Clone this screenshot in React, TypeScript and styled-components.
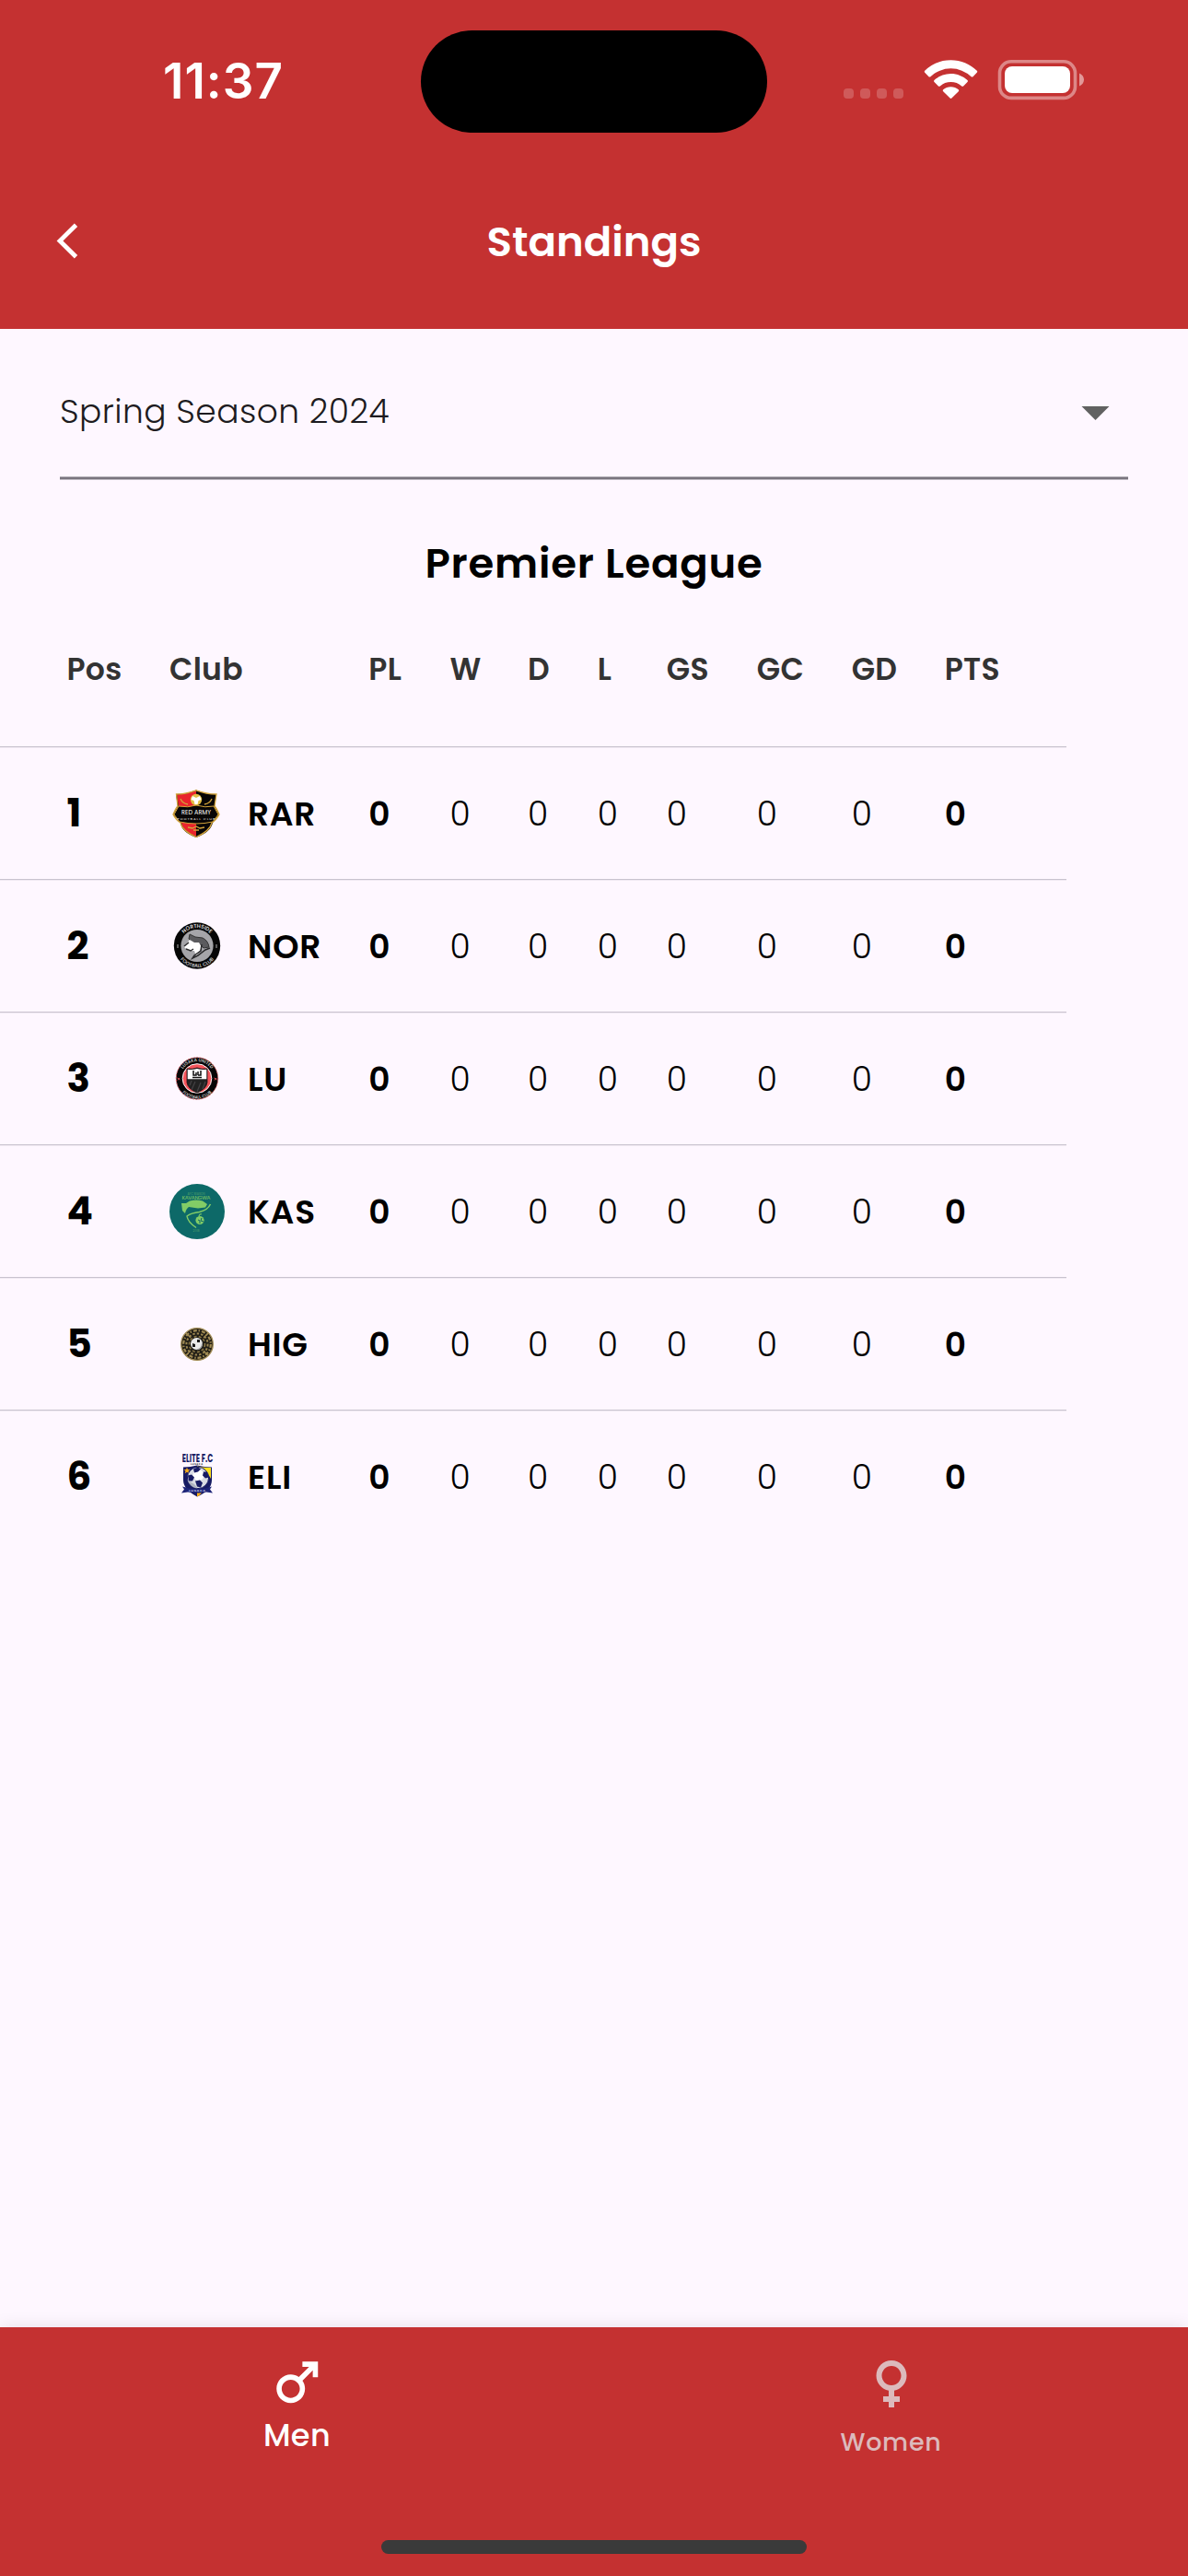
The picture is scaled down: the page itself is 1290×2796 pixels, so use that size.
import React from "react";
import styled, { createGlobalStyle } from "styled-components";

const Global = createGlobalStyle`
  * { box-sizing: border-box; }
  body {
    margin: 0;
    background: #fef7ff;
    font-family: Poppins, Inter, "Noto Sans", sans-serif;
    -webkit-font-smoothing: antialiased;
  }
`;

const Screen = styled.div`
  width: 1290px;
  height: 2796px;
  display: flex;
  flex-direction: column;
  background: #fef7ff;
  overflow: hidden;
`;

const Header = styled.header`
  height: 357px;
  background: #c43131;
  color: #fff;
`;

const StatusBar = styled.div`
  height: 177px;
  padding-top: 33px;
  display: grid;
  grid-template-columns: 457px 376px 1fr;
  align-items: start;
`;

const Clock = styled.div`
  height: 111px;
  padding-left: 177px;
  line-height: 110px;
  font-family: Inter, sans-serif;
  font-size: 53px;
  font-weight: 600;
  letter-spacing: 1px;
`;

const Island = styled.div`
  height: 111px;
  border-radius: 56px;
  background: #000;
`;

const StatusIcons = styled.svg`
  display: block;
  width: 457px;
  height: 111px;
`;

const AppBar = styled.div`
  height: 171px;
  display: grid;
  grid-template-columns: 120px 1fr 120px;
  align-items: center;
`;

const BackButton = styled.button`
  display: flex;
  padding: 0 0 3px 60px;
  border: 0;
  background: none;
`;

const Title = styled.h1`
  margin: 0;
  text-align: center;
  font-size: 45px;
  font-weight: 600;
`;

const Main = styled.main`
  flex: 1;
`;

const Select = styled.div`
  margin: 0 65px;
  height: 160px;
  padding: 18px 20px 0 0;
  display: flex;
  align-items: center;
  justify-content: space-between;
  color: #1d1b20;
  font-size: 36px;
  font-weight: 300;
  letter-spacing: 0.45px;
`;

const Caret = styled.svg`
  display: block;
  width: 31px;
  height: 15px;
  margin-top: 5px;
`;

const Underline = styled.div`
  height: 4px;
  margin: 0 65px;
  background: linear-gradient(#bbb6bf 1px, #79747e 1px 3px, #bbb6bf 3px);
`;

const League = styled.h2`
  height: 181px;
  margin: 0;
  display: flex;
  align-items: center;
  justify-content: center;
  font-size: 45px;
  font-weight: 600;
  letter-spacing: 0.75px;
  color: #000;
`;

const Table = styled.div`
  width: 1158px;
`;

const Row = styled.div<{ $head?: boolean; $last?: boolean }>`
  display: grid;
  grid-template-columns: 111.5px 216.3px 88.1px 84.6px 75.7px 75.2px 97.900px 102.900px 101.100px 1fr;
  align-items: center;
  height: ${(p) => (p.$head ? 109 : 144)}px;
  padding: 0 0 ${(p) => (p.$head ? 59 : 0)}px 72.5px;
  border-bottom: 1px solid ${(p) => (p.$last ? "transparent" : "#c9c3cf")};
  box-shadow: 0 1px 0 ${(p) => (p.$last ? "transparent" : "#f0e9f2")};
`;

const HeadCell = styled.span`
  font-size: 33px;
  line-height: 48px;
  font-weight: 600;
  letter-spacing: 0.3px;
  color: #333;
`;

const Position = styled.span`
  font-size: 42px;
  font-weight: 700;
  color: #000;
`;

const Club = styled.div`
  display: flex;
  align-items: center;
  gap: 25px;
`;

const ClubName = styled.span`
  padding-top: 2px;
  font-size: 36px;
  line-height: 50px;
  font-weight: 600;
  letter-spacing: 0.75px;
  color: #000;
`;

const Crest = styled.svg`
  display: block;
  width: 60px;
  height: 60px;
  overflow: visible;
`;

const Stat = styled.span<{ $bold?: boolean }>`
  padding-top: 2px;
  font-size: 36px;
  line-height: 50px;
  font-weight: ${(p) => (p.$bold ? 600 : 300)};
  color: #000;
`;

const TabBar = styled.nav`
  height: 270px;
  background: #c43131;
  box-shadow: 0 0 18px rgba(0, 0, 0, 0.1);
  display: flex;
  flex-direction: column;
  justify-content: space-between;
  align-items: center;
  padding-bottom: 24px;
`;

const Tabs = styled.div`
  width: 100%;
  display: grid;
  grid-template-columns: 1fr 1fr;
`;

const Tab = styled.div<{ $active?: boolean }>`
  display: flex;
  flex-direction: column;
  align-items: center;
  padding-top: ${(p) => (p.$active ? 26 : 24)}px;
  gap: ${(p) => (p.$active ? 4 : 9)}px;
  color: ${(p) => (p.$active ? "#fff" : "#dcbabc")};
  font-size: ${(p) => (p.$active ? 33.5 : 27)}px;
  line-height: 40px;
  font-weight: 500;
  letter-spacing: ${(p) => (p.$active ? 0.4 : 0.75)}px;
`;

const TabIcon = styled.svg<{ $size: number }>`
  width: ${(p) => p.$size}px;
  height: ${(p) => p.$size}px;
  fill: currentColor;
`;

const HomeIndicator = styled.div`
  width: 462px;
  height: 15px;
  border-radius: 8px;
  background: #3a3a3a;
`;

const RedArmyCrest = () => (
  <Crest viewBox="0 0 60 60">
    <path d="M7 9Q18 9 29 4.500Q40 9 51 9L49 22L54 31L47 40Q45 50 29 56Q13 50 12 40L4 31L9 22Z" fill="#080606" />
    <path d="M8 9.500Q19 9 29 5V55Q14 49 13 40L5 31L10 22Z" fill="#e9242c" />
    <path d="M7.500 9Q18 9 29 4.800Q40 9 51 9L49 22Q51 24 54 31Q51 37 46 40Q44 49 29 55.500Q14 49 12 40Q7 37 4 31Q7 24 9 22Z" fill="none" stroke="#d2a33a" strokeWidth="1.300" />
    <path d="M10 22Q20 24 29 21Q39 24 48 22L53 31L47 39Q38 41 29 41Q20 41 11 39L5 31Z" fill="#080606" stroke="#d2a33a" strokeWidth="1" />
    <circle cx="29" cy="15" r="6.200" fill="#e0be45" />
    <path d="M25 11l4 2 4-2 1.500 4-3 1-1 4h-3l-1-4-3-1z" fill="#fff" />
    <path d="M12 14q2 5 8 6M46 14q-2 5-8 6M20 45l5 1 4-2 4 2 5-1M26 48h6" fill="none" stroke="#d2a33a" strokeWidth="1.300" />
    <text x="29" y="31" textAnchor="middle" textLength="32" fontSize="6.500" fontWeight="400" fill="#fff">RED ARMY</text>
    <text x="29" y="37" textAnchor="middle" textLength="41" fontSize="4" fontWeight="500" fill="#c9c4c0">FOOTBALL CLUB</text>
  </Crest>
);

const NorthsideCrest = () => (
  <Crest viewBox="0 0 60 60">
    <defs>
      <path id="north-top" d="M10.500 29.500A19.500 19.500 0 0 1 49.500 29.500" />
      <path id="north-bottom" d="M6.500 29.500A23.500 23.500 0 0 0 53.500 29.500" />
    </defs>
    <circle cx="30" cy="29.500" r="25.200" fill="#060606" />
    <circle cx="30" cy="29.500" r="17.600" fill="#a5a5a9" />
    <text fontSize="5.800" fontWeight="500" fill="#eee" textAnchor="middle">
      <textPath href="#north-top" startOffset="50%">NORTHSIDE</textPath>
    </text>
    <text fontSize="5.400" fontWeight="500" fill="#ddd" textAnchor="middle">
      <textPath href="#north-bottom" startOffset="50%">FOOTBALL CLUB</textPath>
    </text>
    <path d="M22 17l6 3 8 1q6 3 7 10l-6 1-4-4-8-2-4-4z" fill="#5b5b5e" stroke="#333" strokeWidth="1" />
    <path d="M22 23l5 3 5 0 3 5-4 7-2 3-2-6-6 0-5-4z" fill="#fff" />
    <path d="M16 30l5-4M18 33l5 2 3-2M35 28l-1 7-7 5-2 3 6-3 8-6 5-2" fill="none" stroke="#29292b" strokeWidth="1.500" />
    <path d="M8 29h2M8 31h2M50 29h2M50 31h2" stroke="#aaa" strokeWidth="1" />
  </Crest>
);

const LuCrest = () => (
  <Crest viewBox="0 0 60 60">
    <defs>
      <path id="lu-top" d="M11.500 29.500A18.500 18.500 0 0 1 48.500 29.500" />
      <path id="lu-bottom" d="M8 29.500A22 22 0 0 0 52 29.500" />
    </defs>
    <circle cx="30" cy="29.500" r="22.700" fill="#070707" stroke="#d95a60" strokeWidth="1" strokeDasharray="2 1.200" />
    <circle cx="30" cy="29.500" r="15.800" fill="#f5545a" stroke="#fff" strokeWidth="1" />
    <text fontSize="4.800" fontWeight="500" fill="#ddd" textAnchor="middle">
      <textPath href="#lu-top" startOffset="50%">LUSAKA UNITED</textPath>
    </text>
    <text fontSize="4.600" fontWeight="500" fill="#ddd" textAnchor="middle">
      <textPath href="#lu-bottom" startOffset="50%">FOOTBALL CLUB</textPath>
    </text>
    <path d="M19 19q6 1 11-1 5 2 11 1v15q-1 7-11 11-10-4-11-11z" fill="#222" stroke="#1b1214" strokeWidth=".8" />
    <path d="M19.700 19.700q5 .8 10.300-.8 5 1.600 10.300.8v10.500H19.700z" fill="#fff" />
    <path d="M26 21v5h3v-3M31 26h3v-5M31 22v4M25 28.500h10" fill="none" stroke="#111" strokeWidth="1.500" />
    <path d="M24 42l4-9M30 44l4-10M36 41l3-8M22 37l2-5" stroke="#454345" strokeWidth="1.200" />
    <path d="M8.500 29l3 2M9 31.500l2-2.500M48.500 29l3 2M49 31.500l2-2.500" stroke="#d94a52" strokeWidth="1" />
  </Crest>
);

const KasCrest = () => (
  <Crest viewBox="0 0 60 60">
    <circle cx="30" cy="30" r="30" fill="#0d6968" />
    <text x="29" y="11.500" textAnchor="middle" textLength="19" fontSize="3.200" fill="#4fa068">AFC SEASON</text>
    <text x="29" y="16.500" textAnchor="middle" textLength="31" fontSize="5.800" fontWeight="500" fill="#6dbb62">KAVANGWA</text>
    <path d="M13 21l5 0 4-2.500q7-2 14 0l5 3.500-2 3.500-8 1-10-1.500q-3 2-4 7l-3-3z" fill="#82cc66" />
    <path d="M44.500 22q-3 6.500-12 8.500-9 1-13.500 4.500 1 6.500 10 12.500" fill="none" stroke="#82cc66" strokeWidth="1.500" />
    <circle cx="33" cy="39.500" r="4.600" fill="#82cc66" />
    <path d="M30 35l5-2M31 39l2 1v3M35 37l-1 3 3 1" fill="none" stroke="#0d6968" strokeWidth="1" />
    <path d="M32 35q1-3 3-2" fill="none" stroke="#82cc66" strokeWidth="1.200" />
    <text x="29" y="51.500" textAnchor="middle" fontSize="3.200" fill="#4fa068">2018</text>
  </Crest>
);

const HigCrest = () => (
  <Crest viewBox="0 0 60 60">
    <circle cx="30" cy="30" r="17.300" fill="#201d16" stroke="#a18b54" strokeWidth="1.300" />
    <circle cx="30" cy="30" r="14.800" fill="none" stroke="#a18b54" strokeWidth="2.200" strokeDasharray="4 1.800 1.500 2" />
    <circle cx="30" cy="30" r="11.600" fill="none" stroke="#9b8650" strokeWidth="2" strokeDasharray="2.500 2" />
    <circle cx="30" cy="30" r="8.500" fill="none" stroke="#8a7746" strokeWidth="1.600" strokeDasharray="3 2.200" />
    <path d="M18 18l5 5M42 18l-5 5M18 42l5-5M42 42l-5-5" stroke="#a18b54" strokeWidth="1.200" />
    <circle cx="29.500" cy="29.500" r="6.500" fill="#e9e9e9" />
    <path d="M33 24q4 5 0 10l-4 2q6 1 7-6z" fill="#9a9a9a" />
    <path d="M25 29l3 1v3l-3 0zM30 25l3 0v3l-3 0z" fill="#161616" />
  </Crest>
);

const EliteCrest = () => (
  <Crest viewBox="0 0 60 60">
    <text x="30.500" y="14.300" textAnchor="middle" textLength="33.500" lengthAdjust="spacingAndGlyphs" fontSize="12.500" fontWeight="700" fill="#171b63">ELITE F.C</text>
    <text x="29.500" y="16.600" textAnchor="middle" textLength="13" fontSize="2.600" fontWeight="600" fill="#333">LUSAKA</text>
    <g transform="translate(0 1.500)">
      <path d="M15 18q8 0 15-2 8 2 16 2v14q0 11-16 18-15-8-15-18z" fill="#171b63" />
      <path d="M30 17q8 1.500 15 1.500v12q-3-8-15-12z" fill="#ffe11c" />
      <path d="M19 18.500l1 2h2.500l-2 1.600.8 2.600-2.300-1.400-2.300 1.400.8-2.600-2-1.600H18z" fill="#f7ad19" />
      <circle cx="31" cy="29.500" r="11.600" fill="#d9dce4" stroke="#171b63" strokeWidth="1" />
      <path d="M27 22l7-1 4 4-2 6-6 2-5-5z" fill="#fff" />
      <path d="M26 20l5-2 3 2-3 3-4 1zM20 27l4-1 3 3-2 4-4 0zM37 23l4 0 2 6-4 1-3-3zM28 33l5-1 3 3-2 5-4-1z" fill="#171b63" />
      <path d="M19.500 32q3 8 11 9-3-5-6-6z" fill="#aeb3c0" />
      <path d="M14 39q16 5 32 0l-2 3 3 4-7-1q-10 2-20 0l-7 1 3-4z" fill="#1d2478" />
      <path d="M30 46h5l-3 3-2 1z" fill="#f7ad19" />
      <text x="30" y="44.500" textAnchor="middle" textLength="18" fontSize="4" fontWeight="600" fill="#b9bce0">LUSAKA</text>
    </g>
  </Crest>
);

const columns = ["Pos", "Club", "PL", "W", "D", "L", "GS", "GC", "GD", "PTS"];

const clubs = [
  { name: "RAR", Logo: RedArmyCrest },
  { name: "NOR", Logo: NorthsideCrest },
  { name: "LU", Logo: LuCrest },
  { name: "KAS", Logo: KasCrest },
  { name: "HIG", Logo: HigCrest },
  { name: "ELI", Logo: EliteCrest },
];

export default function App() {
  return (
    <Screen>
      <Global />
      <Header>
        <StatusBar>
          <Clock>11:37</Clock>
          <Island />
          <StatusIcons viewBox="833 33 457 111" fill="#fff">
            {[916, 934, 952, 970].map((x) => (
              <rect key={x} x={x} y="96" width="11" height="11" rx="4" opacity="0.2" />
            ))}
            <path d="M1032.500 65.300c10.900 0 21 4.300 28.300 11.500.6.600.6 1.400 0 2l-4.300 4.400c-.5.500-1.300.5-1.900 0a32 32 0 0 0-44.200 0c-.6.500-1.400.5-1.900 0l-4.300-4.400c-.6-.6-.6-1.400 0-2a40.400 40.400 0 0 1 28.300-11.500z" />
            <path d="M1032.500 80c6.900 0 13.200 2.700 18 7 .6.600.6 1.400 0 2l-4.400 4.400c-.5.500-1.300.5-1.900 0a17.600 17.600 0 0 0-23.400 0c-.6.500-1.400.5-1.900 0l-4.400-4.400c-.6-.6-.6-1.400 0-2 4.800-4.300 11.100-7 18-7z" />
            <path d="M1032.500 94.200c3.100 0 6 1.100 8.300 3 .6.500.6 1.400 0 2l-7.400 7.400c-.5.500-1.300.5-1.800 0l-7.400-7.400c-.6-.6-.6-1.500 0-2 2.300-1.900 5.200-3 8.300-3z" />
            <rect x="1085.500" y="66.800" width="82" height="39.600" rx="12.500" fill="none" stroke="#fff" strokeWidth="3.600" opacity="0.42" />
            <rect x="1091" y="72" width="71" height="29" rx="8" />
            <path d="M1172 79.500c3 1.200 5 3.800 5 7s-2 5.800-5 7z" opacity="0.5" />
          </StatusIcons>
        </StatusBar>
        <AppBar>
          <BackButton aria-label="Back">
            <svg width="26" height="40" viewBox="0 0 26 40" fill="none" stroke="#fff" strokeWidth="4.800">
              <path d="M22.500 3.200L5 20.500l17.500 17.300" />
            </svg>
          </BackButton>
          <Title>Standings</Title>
        </AppBar>
      </Header>
      <Main>
        <Select>
          Spring Season 2024
          <Caret viewBox="0 0 31 15">
            <path d="M0.500 0h30l-15 15z" fill="#616161" />
          </Caret>
        </Select>
        <Underline />
        <League>Premier League</League>
        <Table>
          <Row $head>
            {columns.map((c) => (
              <HeadCell key={c}>{c}</HeadCell>
            ))}
          </Row>
          {clubs.map(({ name, Logo }, i) => (
            <Row key={name} $last={i === clubs.length - 1}>
              <Position>{i + 1}</Position>
              <Club>
                <Logo />
                <ClubName>{name}</ClubName>
              </Club>
              {columns.slice(2).map((c) => (
                <Stat key={c} $bold={c === "PL" || c === "PTS"}>
                  0
                </Stat>
              ))}
            </Row>
          ))}
        </Table>
      </Main>
      <TabBar>
        <Tabs>
          <Tab $active>
            <TabIcon $size={67.5} viewBox="0 0 24 24">
              <path d="M9.500 11c1.930 0 3.500 1.570 3.500 3.500S11.430 18 9.500 18 6 16.430 6 14.500 7.570 11 9.500 11zm0-2C6.460 9 4 11.460 4 14.500S6.460 20 9.500 20s5.500-2.460 5.500-5.500c0-1.160-.36-2.230-.97-3.120L18 7.420V10h2V4h-6v2h2.580l-3.970 3.970C11.730 9.360 10.660 9 9.500 9z" />
            </TabIcon>
            Men
          </Tab>
          <Tab>
            <TabIcon $size={72} viewBox="0 0 24 24">
              <path d="M17.500 9.500C17.500 6.460 15.040 4 12 4S6.500 6.460 6.500 9.500c0 2.700 1.940 4.930 4.500 5.400V17H9v2h2v2h2v-2h2v-2h-2v-2.100c2.560-.47 4.500-2.700 4.500-5.400zm-9 0C8.500 7.570 10.070 6 12 6s3.500 1.570 3.500 3.500S13.930 13 12 13s-3.500-1.570-3.500-3.500z" />
            </TabIcon>
            Women
          </Tab>
        </Tabs>
        <HomeIndicator />
      </TabBar>
    </Screen>
  );
}
